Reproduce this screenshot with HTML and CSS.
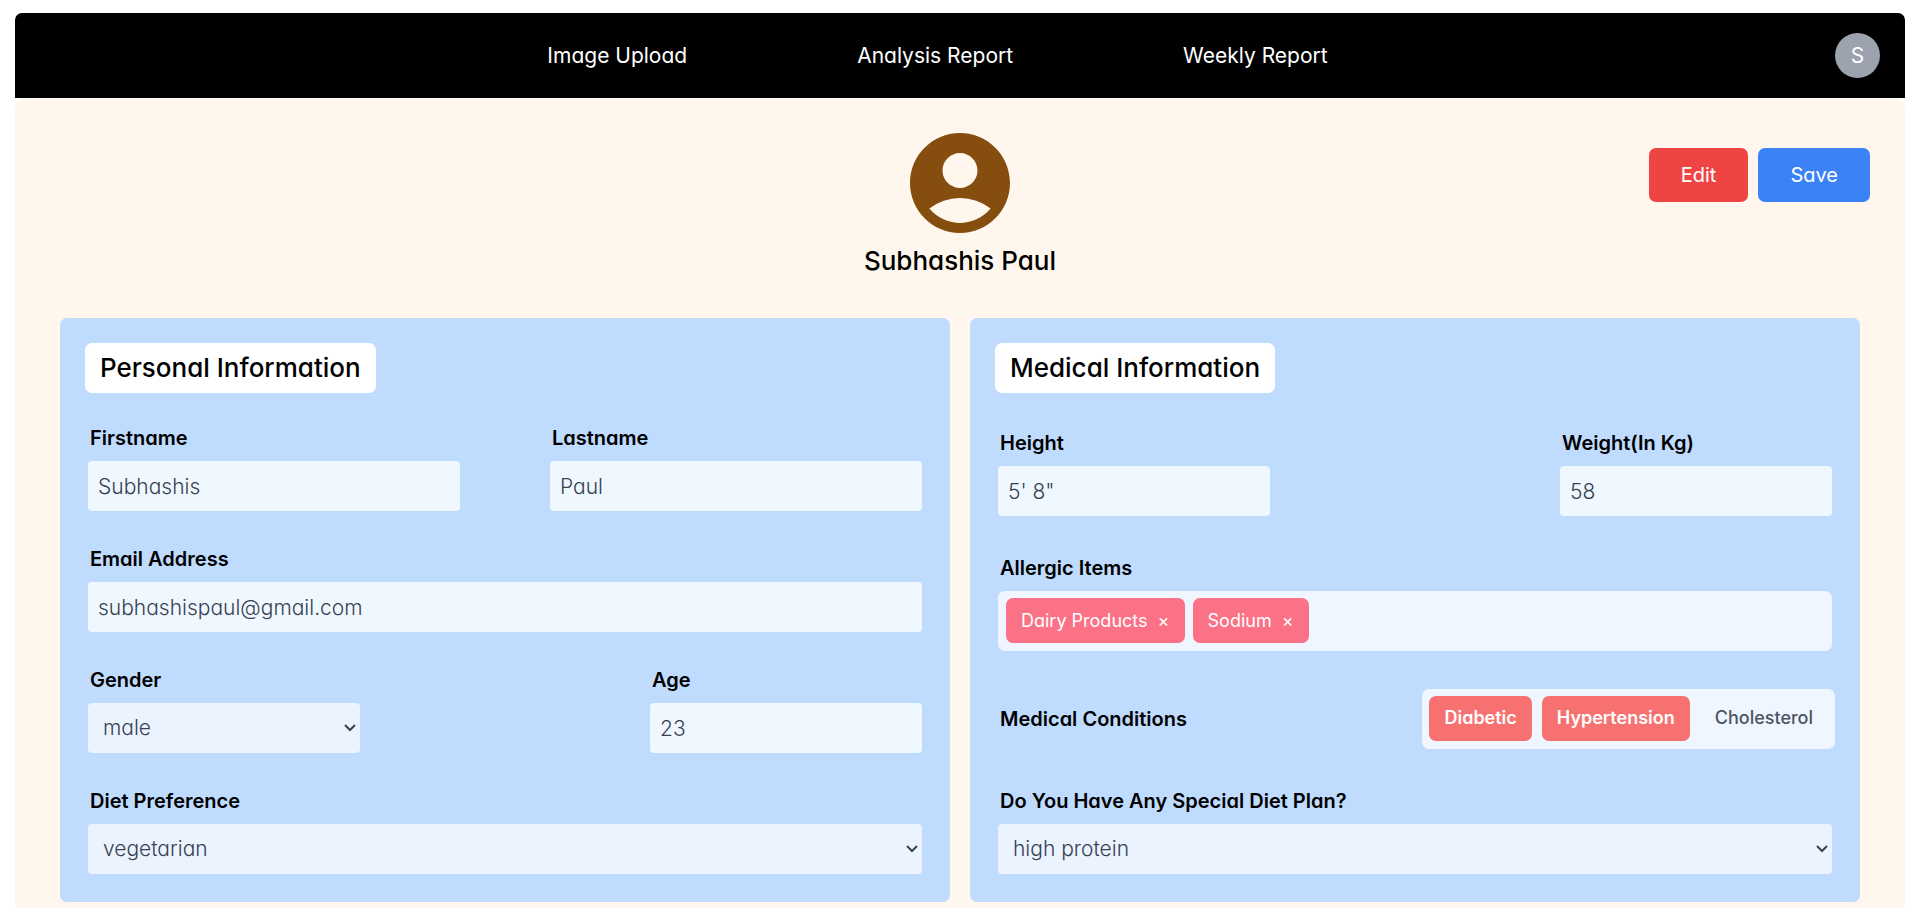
FILE: index.html
```
<!DOCTYPE html>
<html lang="en">
<head>
  <meta charset="UTF-8" />
  <meta name="viewport" content="width=device-width, initial-scale=1.0">
  <title>Profile</title>
  <link rel="stylesheet" href="styles.css">
</head>
<body>
  <header class="navbar">
    <nav class="nav-links">
      <a href="#upload">Image Upload</a>
      <a href="#analysis">Analysis Report</a>
      <a href="#weekly">Weekly Report</a>
    </nav>
    <button type="button" class="user-badge">S</button>
  </header>

  <main class="profile-page">
    <section class="profile-head">
      <div class="profile-user">
        <svg class="profile-icon" viewBox="2 2 20 20" fill="currentColor" aria-hidden="true">
          <path d="M12 2C6.48 2 2 6.48 2 12s4.48 10 10 10 10-4.48 10-10S17.52 2 12 2zm0 4c1.93 0 3.5 1.57 3.5 3.5S13.93 13 12 13s-3.5-1.57-3.5-3.5S10.07 6 12 6zm0 14c-2.03 0-4.43-.82-6.14-2.88a9.947 9.947 0 0 1 12.28 0C16.43 19.18 14.03 20 12 20z"/>
        </svg>
        <h1 class="profile-name">Subhashis Paul</h1>
      </div>
      <div class="profile-actions">
        <button type="button" class="btn btn-edit">Edit</button>
        <button type="submit" form="profile-form" class="btn btn-save">Save</button>
      </div>
    </section>

    <form id="profile-form" class="cards">
      <!-- Personal -->
      <section class="card">
        <h2 class="card-title">Personal Information</h2>
        <div class="card-rows">
          <div class="row row-even">
            <div class="field">
              <label for="firstname">Firstname</label>
              <input type="text" id="firstname" value="Subhashis">
            </div>
            <div class="field">
              <label for="lastname">Lastname</label>
              <input type="text" id="lastname" value="Paul">
            </div>
          </div>
          <div class="field">
            <label for="email">Email Address</label>
            <input type="email" id="email" value="subhashispaul@gmail.com">
          </div>
          <div class="row">
            <div class="field field-small">
              <label for="gender">Gender</label>
              <select id="gender">
                <option>male</option>
                <option>female</option>
              </select>
            </div>
            <div class="field field-small">
              <label for="age">Age</label>
              <input type="text" id="age" value="23">
            </div>
          </div>
          <div class="field">
            <label for="diet">Diet Preference</label>
            <select id="diet">
              <option>vegetarian</option>
              <option>non vegetarian</option>
            </select>
          </div>
        </div>
      </section>

      <!-- Medical -->
      <section class="card card-medical">
        <h2 class="card-title">Medical Information</h2>
        <div class="card-rows">
          <div class="row">
            <div class="field field-small">
              <label for="height">Height</label>
              <input type="text" id="height" value="5' 8&quot;">
            </div>
            <div class="field field-small">
              <label for="weight">Weight(In Kg)</label>
              <input type="text" id="weight" value="58">
            </div>
          </div>
          <div class="field">
            <span class="field-name" id="allergic-label">Allergic Items</span>
            <div class="chip-box" role="group" aria-labelledby="allergic-label">
              <span class="chip chip-allergy">Dairy Products <button type="button" class="chip-remove" aria-label="Remove Dairy Products">×</button></span>
              <span class="chip chip-allergy">Sodium <button type="button" class="chip-remove" aria-label="Remove Sodium">×</button></span>
            </div>
          </div>
          <div class="row conditions">
            <span class="field-name" id="conditions-label">Medical Conditions</span>
            <div class="chip-box chip-box-toggle" role="group" aria-labelledby="conditions-label">
              <button type="button" class="chip chip-toggle active" aria-pressed="true">Diabetic</button>
              <button type="button" class="chip chip-toggle active" aria-pressed="true">Hypertension</button>
              <button type="button" class="chip chip-toggle" aria-pressed="false">Cholesterol</button>
            </div>
          </div>
          <div class="field">
            <label for="plan">Do You Have Any Special Diet Plan?</label>
            <select id="plan">
              <option>high protein</option>
              <option>low carb</option>
            </select>
          </div>
        </div>
      </section>
    </form>
  </main>
</body>
</html>
```

FILE: styles.css
```
/* Global Reset */
* { margin: 0; padding: 0; box-sizing: border-box; }
body {
  font-family: Inter, sans-serif;
  font-feature-settings: "cv11";
  font-size: 20px;
  line-height: 30px;
  color: #000;
  background: #fff;
  padding: 13px 13px 0 15px;
}
button, input, select {
  font: inherit;
  font-feature-settings: inherit;
  color: inherit;
  border: none;
  outline: none;
}
button { cursor: pointer; }

/* Navbar */
.navbar {
  display: flex;
  align-items: center;
  padding: 20px 25px;
  background: #000;
  color: #fff;
  border-radius: 7px 7px 0 0;
}
.nav-links {
  flex: 1;
  display: flex;
  justify-content: center;
  gap: 170px;
  font-size: 21px;
}
.nav-links a { color: #fff; text-decoration: none; }
.user-badge {
  width: 45px;
  height: 45px;
  border-radius: 50%;
  background: #9ca3af;
  color: #fff;
  font-size: 21px;
}

/* Profile header */
.profile-page {
  background: #fff7ed;
  border-radius: 10px 10px 0 0;
  padding-bottom: 45px;
}
.profile-head {
  display: grid;
  grid-template-columns: 1fr auto 1fr;
  padding: 35px 35px 40px;
}
.profile-user { grid-column: 2; text-align: center; }
.profile-icon {
  display: block;
  width: 100px;
  height: 100px;
  margin: 0 auto 10px;
  color: #854d0e;
}
.profile-name { font-size: 26px; line-height: 35px; font-weight: 500; }
.profile-actions {
  display: flex;
  justify-content: flex-end;
  align-items: flex-start;
  gap: 10px;
  padding-top: 15px;
}
.btn {
  padding: 12px 32px;
  border-radius: 7px;
  color: #fff;
}
.btn-edit { background: #ef4444; }
.btn-save { background: #3b82f6; }

/* Cards */
.cards {
  display: grid;
  grid-template-columns: 1fr 1fr;
  gap: 20px;
  padding: 0 45px;
}
.card {
  display: flex;
  flex-direction: column;
  gap: 30px;
  padding: 25px 25px 28px;
  background: #bfdbfe;
  border-radius: 7px;
}
.card-medical { gap: 35px; }
.card-title {
  align-self: flex-start;
  padding: 10px 15px;
  background: #fff;
  border-radius: 7px;
  font-size: 26px;
  font-weight: 500;
}
.card-rows {
  flex: 1;
  display: flex;
  flex-direction: column;
  justify-content: space-between;
  gap: 33px;
  padding: 0 3px;
}
.row { display: flex; justify-content: space-between; }
.row-even { gap: 90px; }
.row-even .field { flex: 1; }

/* Fields */
.field { display: flex; flex-direction: column; gap: 8px; }
.field-small { width: 272px; }
label, .field-name { padding-left: 2px; font-weight: 600; }
input, select {
  width: 100%;
  height: 50px;
  padding: 0 10px;
  border-radius: 4px;
  background: #f0f8ff;
  color: #374151;
  font-size: 21px;
  font-weight: 300;
}
select {
  appearance: none;
  padding: 0 20px 0 15px;
  background: #ebf3ff url("data:image/svg+xml,%3Csvg xmlns='http://www.w3.org/2000/svg' width='12' height='8' viewBox='0 0 12 8'%3E%3Cpath d='M1 1l5 5 5-5' fill='none' stroke='%23374151' stroke-width='2'/%3E%3C/svg%3E") no-repeat right 4px center;
}

/* Chips */
.chip-box {
  display: flex;
  gap: 8px;
  padding: 7px 8px 8px;
  background: #eff6ff;
  border-radius: 7px;
}
.chip-box-toggle { gap: 10px; padding: 7px 7px 8px; margin-right: -3px; }
.chip {
  display: flex;
  align-items: center;
  height: 45px;
  padding: 0 15px;
  border-radius: 7px;
  font-size: 18px;
}
.chip-allergy { gap: 10px; background: #fb7185; color: #fff; }
.chip-remove { width: 12px; background: none; color: #fff; }
.chip-toggle { background: none; color: #4b5563; font-weight: 500; }
.chip-toggle.active { background: #f87171; color: #fff; font-weight: 600; }
.conditions { align-items: center; }
```
